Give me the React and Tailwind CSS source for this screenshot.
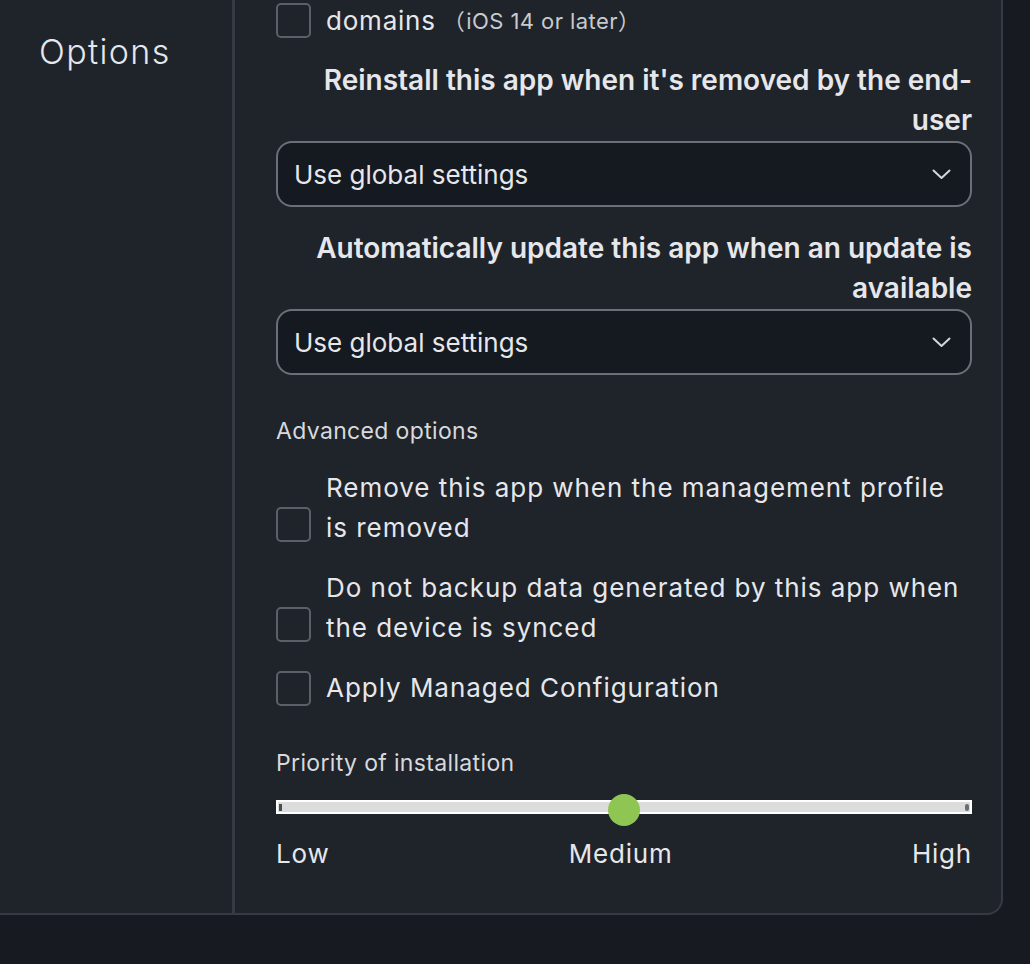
import { useState } from 'react';

// Plain square checkbox used in the options list.
function Box({ checked, onChange }) {
  return (
    <button
      type="button"
      onClick={onChange}
      className={`w-[35px] h-[35px] shrink-0 rounded-[5px] border-2 border-[#5b6068] ${checked ? 'bg-[#8fc653]' : 'bg-transparent'}`}
    />
  );
}

// Dropdown look-alike with the thin chevron on the right.
function Select({ value }) {
  return (
    <div className="mt-px h-[66px] flex items-center justify-between rounded-[16px] border-2 border-[#6b7078] bg-[#151920] pl-[16px] pr-[19px] text-[26px] text-[#e6e7ea]">
      <span>{value}</span>
      <svg width="19" height="11" viewBox="0 0 19 11" fill="none">
        <path d="M1.5 1.5 L9.5 9 L17.5 1.5" stroke="#d4d6da" strokeWidth="2" strokeLinecap="round" strokeLinejoin="round" />
      </svg>
    </div>
  );
}

export default function App() {
  const [checks, setChecks] = useState({ domains: false, remove: false, backup: false, managed: false });
  const toggle = (k) => setChecks({ ...checks, [k]: !checks[k] });

  return (
    <div className="min-h-screen bg-[#171a21] overflow-hidden" style={{ fontFamily: 'Inter, "Noto Sans", sans-serif' }}>
      <div className="w-[1003px] h-[915px] flex bg-[#1f232a] border-r-2 border-b-2 border-[#363a42] rounded-br-[16px]">
        {/* left column title */}
        <div className="w-[235px] shrink-0 border-r-[3px] border-[#363a42] pl-[39px] pt-[32px]">
          <h2 className="text-[34px] leading-[40px] font-light tracking-[0.04em] text-[#e6e7ea]">Options</h2>
        </div>

        {/* right column settings */}
        <div className="flex-1 pl-[41px] pr-[29px] text-[#e6e7ea]">
          <div className="h-[40px] flex items-center gap-[15px]">
            <Box checked={checks.domains} onChange={() => toggle('domains')} />
            <span className="flex items-center">
              <span className="text-[26px] tracking-[0.03em]">domains</span>
              <span className="ml-[7px] text-[22px] text-[#c9cacd] tracking-[0.02em]">
                <span className="mr-px" style={{ fontFamily: '"Noto Sans CJK SC", sans-serif' }}>（</span>
                iOS 14 or later
                <span style={{ fontFamily: '"Noto Sans CJK SC", sans-serif' }}>）</span>
              </span>
            </span>
          </div>

          <p className="mt-[20px] text-right text-[28px] leading-[40px] font-semibold">
            Reinstall this app when it's removed by the end-user
          </p>
          <Select value="Use global settings" />

          <p className="mt-[21px] text-right text-[28px] leading-[40px] font-semibold">
            Automatically update this app when an update is available
          </p>
          <Select value="Use global settings" />

          <p className="mt-[40px] text-[23px] leading-[32px] text-[#d8d9dc] tracking-[0.015em]">Advanced options</p>

          <div className="mt-[21px] flex flex-col gap-[20px]">
            <label className="flex items-end gap-[15px]">
              <span className="mb-[2px]"><Box checked={checks.remove} onChange={() => toggle('remove')} /></span>
              <span className="text-[26px] leading-[40px] tracking-[0.037em]">
                Remove this app when the management profile is removed
              </span>
            </label>
            <label className="flex items-end gap-[15px]">
              <span className="mb-[2px]"><Box checked={checks.backup} onChange={() => toggle('backup')} /></span>
              <span className="text-[26px] leading-[40px] tracking-[0.037em]">
                Do not backup data generated by this app when the device is synced
              </span>
            </label>
            <label className="flex items-center gap-[15px] h-[40px]">
              <Box checked={checks.managed} onChange={() => toggle('managed')} />
              <span className="text-[26px] leading-[40px] tracking-[0.037em]">Apply Managed Configuration</span>
            </label>
          </div>

          <p className="mt-[39px] text-[23px] leading-[32px] text-[#d8d9dc] tracking-[0.015em]">Priority of installation</p>

          {/* priority slider, thumb sits at Medium */}
          <div className="relative mt-[21px] h-[14px]">
            <div className="h-[14px] flex items-center justify-between border-2 border-white bg-[#dcdcdc] px-px">
              <span className="w-[3px] h-[7px] bg-[#4a4d52]" />
              <span className="w-[4px] h-[7px] rounded-full bg-[#6a6d72]" />
            </div>
            <div className="absolute left-1/2 top-[-6px] w-[32px] h-[32px] -translate-x-1/2 rounded-full bg-[#8fc653]" />
          </div>

          <div className="mt-[20px] flex justify-between text-[26px] leading-[40px] tracking-[0.03em]">
            <span>Low</span>
            <span>Medium</span>
            <span>High</span>
          </div>
        </div>
      </div>
    </div>
  );
}
